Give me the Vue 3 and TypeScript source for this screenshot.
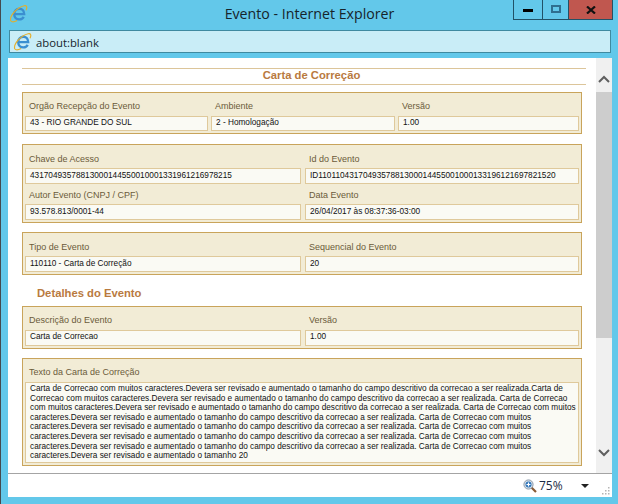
<script setup lang="ts">
interface Field { label: string; value: string }
interface Group { cols: string; fields: Field[]; cls: string }
const head: Group[] = [
  { cls: 'g1', cols: 'c3', fields: [
    { label: 'Orgão Recepção do Evento', value: '43 - RIO GRANDE DO SUL' },
    { label: 'Ambiente', value: '2 - Homologação' },
    { label: 'Versão', value: '1.00' } ] },
  { cls: 'g2', cols: 'c2', fields: [
    { label: 'Chave de Acesso', value: '43170493578813000144550010001331961216978215' },
    { label: 'Id do Evento', value: 'ID1101104317049357881300014455001000133196121697821520' },
    { label: 'Autor Evento (CNPJ / CPF)', value: '93.578.813/0001-44' },
    { label: 'Data Evento', value: '26/04/2017 às 08:37:36-03:00' } ] },
  { cls: 'g3', cols: 'c2', fields: [
    { label: 'Tipo de Evento', value: '110110 - Carta de Correção' },
    { label: 'Sequencial do Evento', value: '20' } ] },
]
const detail: Field[] = [
  { label: 'Descrição do Evento', value: 'Carta de Correcao' },
  { label: 'Versão', value: '1.00' },
]
const body = 'caracteres.Devera ser revisado e aumentado o tamanho do campo descritivo da correcao a ser realizada. Carta de Correcao com muitos'
const lines: string[] = [
  'Carta de Correcao com muitos caracteres.Devera ser revisado e aumentado o tamanho do campo descritivo da correcao a ser realizada.Carta de',
  'Correcao com muitos caracteres.Devera ser revisado e aumentado o tamanho do campo descritivo da correcao a ser realizada. Carta de Correcao',
  'com muitos caracteres.Devera ser revisado e aumentado o tamanho do campo descritivo da correcao a ser realizada. Carta de Correcao com muitos',
  body, body, body, body,
  'caracteres.Devera ser revisado e aumentado o tamanho 20',
]
</script>

<template>
  <div class="window">
    <header class="titlebar">
      <svg class="ie big" viewBox="0 0 20 20">
        <path d="M5.5 10.7H16C16 6.8 13.5 5 11 5C7.8 5 5.5 7.5 5.5 10.7C5.5 14.2 8 16.2 11 16.2C13 16.2 14.6 15.3 15.5 13.6" fill="none" stroke="#3b8fd0" stroke-width="2.5" />
        <path d="M1.8 17.6C0.4 13 8 3.6 16 1.8C18.8 1.2 19.4 3.5 18 6.5M1.8 17.6C3.2 19.6 6 18.8 8.5 17.4" fill="none" stroke="#e4ae2b" stroke-width="1.2" />
      </svg>
      <span class="title">Evento - Internet Explorer</span>
      <div class="controls">
        <div class="ctl minimize"><i></i></div>
        <div class="ctl maximize"><i></i></div>
        <div class="ctl close">
          <svg viewBox="0 0 10 8" width="10" height="8"><path d="M1 0.5L9 7.5M9 0.5L1 7.5" stroke="#111" stroke-width="2.2" /></svg>
        </div>
      </div>
    </header>

    <div class="address">
      <svg class="ie" viewBox="0 0 20 20">
        <path d="M5.5 10.7H16C16 6.8 13.5 5 11 5C7.8 5 5.5 7.5 5.5 10.7C5.5 14.2 8 16.2 11 16.2C13 16.2 14.6 15.3 15.5 13.6" fill="none" stroke="#3b8fd0" stroke-width="2.5" />
        <path d="M1.8 17.6C0.4 13 8 3.6 16 1.8C18.8 1.2 19.4 3.5 18 6.5M1.8 17.6C3.2 19.6 6 18.8 8.5 17.4" fill="none" stroke="#e4ae2b" stroke-width="1.2" />
      </svg>
      <span class="url">about:blank</span>
    </div>

    <main class="page">
      <div class="doc">
        <h1 class="doc-title">Carta de Correção</h1>

        <section v-for="g in head" :key="g.cls" class="box" :class="[g.cols, g.cls]">
          <div v-for="f in g.fields" :key="f.label" class="field">
            <label>{{ f.label }}</label>
            <div class="value">{{ f.value }}</div>
          </div>
        </section>

        <h2 class="sub-title">Detalhes do Evento</h2>

        <section class="box c2 g4">
          <div v-for="f in detail" :key="f.label" class="field">
            <label>{{ f.label }}</label>
            <div class="value">{{ f.value }}</div>
          </div>
        </section>

        <section class="box g5">
          <label>Texto da Carta de Correção</label>
          <div class="textarea">
            <div v-for="(l, i) in lines" :key="i">{{ l }}</div>
          </div>
        </section>
      </div>

      <aside class="scrollbar">
        <svg class="arrow up" viewBox="0 0 12 8" width="12" height="8"><path d="M1 7L6 2L11 7" fill="none" stroke="#5f5f5f" stroke-width="2" /></svg>
        <div class="thumb"></div>
        <div class="rest"></div>
        <svg class="arrow down" viewBox="0 0 12 8" width="12" height="8"><path d="M1 1L6 6L11 1" fill="none" stroke="#5f5f5f" stroke-width="2" /></svg>
      </aside>
    </main>

    <footer class="status">
      <svg class="zoom-icon" viewBox="0 0 14 14" width="14" height="14">
        <path d="M8.5 8.5L13 13" stroke="#8a5a34" stroke-width="2.2" />
        <circle cx="5.5" cy="5.5" r="4.6" fill="#d5dfe9" stroke="#8d9aa8" />
        <circle cx="5.5" cy="5.5" r="3" fill="#2f74b8" />
        <path d="M3.5 5.5H7.5M5.5 3.5V7.5" stroke="#fff" stroke-width="1.2" />
      </svg>
      <span class="pct">75%</span>
      <i class="caret"></i>
      <svg class="grip" viewBox="0 0 10 10" width="10" height="10">
        <g fill="#b5b5b5">
          <rect x="7" y="1" width="1.5" height="1.5" /><rect x="4" y="4" width="1.5" height="1.5" /><rect x="7" y="4" width="1.5" height="1.5" />
          <rect x="1" y="7" width="1.5" height="1.5" /><rect x="4" y="7" width="1.5" height="1.5" /><rect x="7" y="7" width="1.5" height="1.5" />
        </g>
      </svg>
    </footer>
  </div>
</template>

<style scoped>
.window { width: 618px; height: 504px; box-sizing: border-box; background: #63c8ea; border-left: 1px solid #454a4e; display: flex; flex-direction: column; overflow: hidden; font-family: "Liberation Sans", Arial, sans-serif; }
.titlebar { height: 30px; flex: none; position: relative; display: flex; align-items: flex-start; justify-content: center; }
.ie { width: 19px; height: 19px; flex: none; }
.ie.big { position: absolute; left: 8px; top: 4px; }
.title { font-family: "Open Sans", sans-serif; font-size: 14.2px; line-height: 20px; margin-top: 4px; color: #16242b; }
.controls { position: absolute; left: 512px; top: 0; width: 100px; height: 20px; box-sizing: border-box; display: flex; border: 1px solid #215267; border-top: 0; }
.ctl { display: flex; align-items: center; justify-content: center; height: 19px; }
.minimize { width: 28px; border-right: 1px solid #215267; }
.minimize i { display: block; width: 10px; height: 3px; background: #000; margin-top: 1px; }
.maximize { width: 25px; border-right: 1px solid #215267; }
.maximize i { display: block; width: 6px; height: 4px; border: 2px solid #2f6f8f; margin-bottom: 1px; }
.close { flex: 1; background: #c0574f; }
.address { height: 23px; flex: none; box-sizing: border-box; margin: 0 7px 0 8px; background: #c9edf7; border: 1px solid #3f8aa0; display: flex; align-items: center; gap: 4px; padding-left: 3px; font-family: "Open Sans", sans-serif; font-size: 11.3px; color: #16242b; }
.url { margin-top: 1px; }
.page { margin: 5px 6px 0 7px; height: 415px; flex: none; display: flex; background: #fff; overflow: hidden; }
.doc { flex: 1; min-width: 0; padding: 10px 10px 0 14px; overflow: hidden; }
.doc-title { margin: 0 0 7px; height: 15px; border-top: 1px solid #dcc59a; border-bottom: 1px solid #dcc59a; font-size: 11.25px; line-height: 13px; font-weight: bold; color: #b97a3f; text-align: center; padding-left: 15px; }
.box { margin: 0 4px 9px 0; box-sizing: border-box; background: #f2ecd6; border: 1px solid #c9a45b; padding: 0 2px 2px; display: grid; align-content: start; }
.c3 { grid-template-columns: 183px 184px 1fr; column-gap: 3px; }
.c2 { grid-template-columns: 276px 1fr; column-gap: 4px; }
.g1 { height: 42px; padding-top: 6px; margin-bottom: 10px; }
.g2 { height: 79px; padding-top: 7px; row-gap: 4px; }
.g3 { height: 43px; padding-top: 7px; }
.g4 { height: 43px; padding-top: 6px; }
.g5 { height: 108px; padding-top: 6px; margin-bottom: 0; display: block; }
label { display: block; height: 16px; padding-left: 4px; font-size: 9px; line-height: 14px; color: #6b5b3a; }
.g1 label, .g4 label, .g5 label { height: 17px; }
.value { box-sizing: border-box; height: 16px; background: #fafaf4; border: 1px solid #dfc99b; padding-left: 4px; font-size: 8.25px; line-height: 13px; color: #111; white-space: nowrap; overflow: hidden; }
.g1 .value { height: 15px; line-height: 12px; }
.g2 .value { line-height: 13.5px; }
.g3 .value { line-height: 14px; }
.g4 .value { line-height: 12px; }
.sub-title { margin: 11px 0 5px 15px; height: 15px; font-size: 11.25px; line-height: 15px; font-weight: bold; color: #b97a3f; }
.textarea { box-sizing: border-box; height: 81px; background: #fafaf4; border: 1px solid #dfc99b; padding: 1px 0 0 4px; font-size: 8.25px; line-height: 9.6px; color: #111; white-space: nowrap; overflow: hidden; }
.scrollbar { width: 16px; flex: none; background: #f0f0f0; display: flex; flex-direction: column; align-items: center; }
.arrow { flex: none; }
.up { margin: 17px 0 9px; }
.thumb { width: 16px; height: 246px; flex: none; background: #cdcdcd; }
.rest { flex: 1; }
.down { margin-bottom: 16px; }
.status { margin: 0 6px 0 7px; height: 24px; flex: none; box-sizing: border-box; background: #fff; border-top: 1px solid #a4a4a4; position: relative; display: flex; align-items: center; padding-left: 515px; }
.zoom-icon { flex: none; }
.pct { font-family: "Open Sans", sans-serif; font-size: 12px; color: #1d2a44; margin-left: 2px; width: 42px; }
.caret { width: 0; height: 0; border-left: 4px solid transparent; border-right: 4px solid transparent; border-top: 4px solid #222; }
.grip { position: absolute; right: 1px; bottom: 1px; }
</style>
